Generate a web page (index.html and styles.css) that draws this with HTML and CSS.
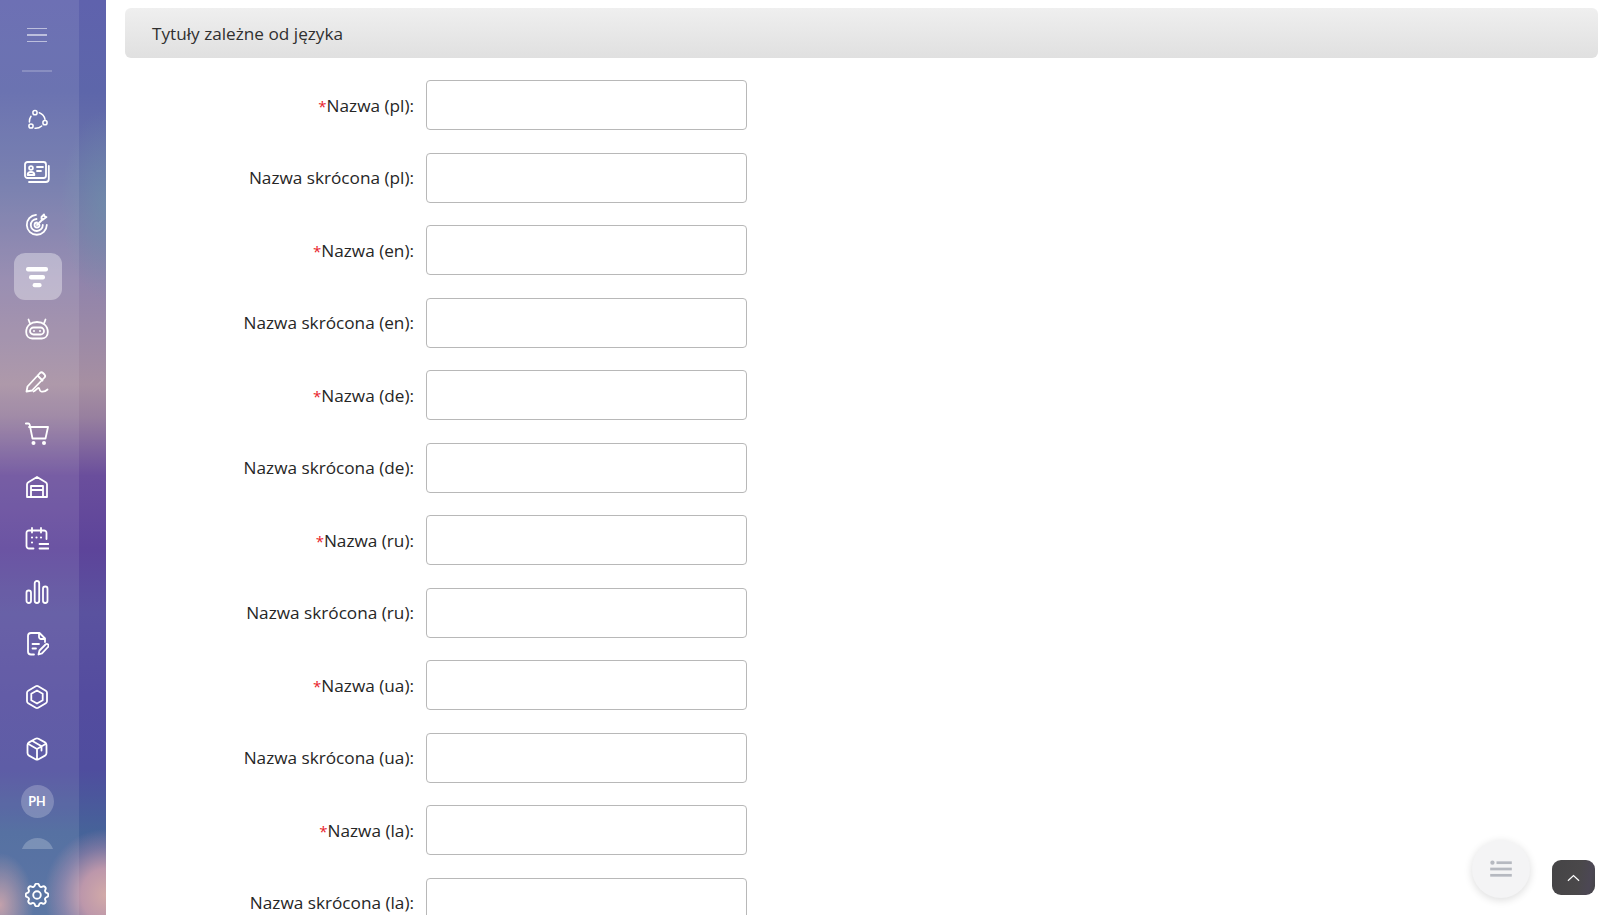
FILE: index.html
```html
<!DOCTYPE html>
<html lang="pl">
<head>
<meta charset="utf-8">
<title>Tytuły zależne od języka</title>
<link rel="stylesheet" href="styles.css">
</head>
<body>
<div class="app">
  <aside class="sidebar">
    <div class="rail">
      <button class="burger" aria-label="Menu"><span></span><span></span><span></span></button>
      <div class="rule"></div>
      <nav class="nav">
        <a class="item"><svg class="ico" viewBox="0 0 24 24"><g class="thin"><circle cx="10" cy="5.700" r="2.100"/><circle cx="6" cy="19" r="2.100"/><circle cx="20" cy="15.700" r="2.100"/><path d="M6 9.300A9 9 0 0 0 4.400 15M14.300 5.700A9 9 0 0 1 20 12.300M10 21.300A9 9 0 0 0 16.700 19"/></g></svg></a>
        <a class="item"><svg class="ico wide" viewBox="0 0 26 22"><rect x="1" y="1" width="21" height="16" rx="2.500"/><path d="M24.800 5v13a3 3 0 0 1-3 3H5"/><circle cx="7" cy="7" r="1.900"/><path d="M3.600 14c0-2 1.500-3 3.400-3s3.400 1 3.400 3zM13 6h6M13 10h4"/></svg></a>
        <a class="item"><svg class="ico" viewBox="0 0 24 24"><path d="M21.800 13A10 10 0 1 1 11 2.800M17.800 13a6 6 0 1 1-6.300-6M14.500 13a2.500 2.500 0 1 1-2.500-2.500M12 13l6-6"/><path d="M16.500 5l2.500-2.500.6 1.900 1.900.6L18 7.500l-1.500-.5z"/></svg></a>
        <a class="item active"><svg class="ico" viewBox="0 0 24 24"><rect class="solid" x="1" y="2" width="22" height="4.400" rx="2"/><rect class="solid" x="4" y="10" width="16" height="4.400" rx="2"/><rect class="solid" x="7.600" y="18" width="9" height="4.200" rx="2"/></svg></a>
        <a class="item"><svg class="ico" viewBox="0 0 24 24"><path d="M5 6.500L3.500 2.500M19 6.500l1.500-4M12 5c-6 0-10.800 3.500-10.800 10 0 4 2.500 6.500 6 6.500h9.600c3.500 0 6-2.500 6-6.500C22.800 8.500 18 5 12 5z"/><rect x="5" y="10.500" width="14" height="7" rx="3.500"/><circle class="solid" cx="9" cy="14" r="1"/><circle class="solid" cx="15" cy="14" r="1"/></svg></a>
        <a class="item"><svg class="ico" viewBox="0 0 24 24"><path d="M2.500 16.500L15 3a2.200 2.200 0 0 1 3 0l1.500 1.500a2.200 2.200 0 0 1 0 3L7 20.500 1.500 21.500zM12.500 5.500l5 5M8.500 21.500c2.500-1 3.500-3.500 5-3.500s.5 3 2.500 3.500 5-.5 6.500-2"/></svg></a>
        <a class="item"><svg class="ico" viewBox="0 0 24 24"><path d="M.8 1.500h2.500c.7 0 1.200.5 1.400 1.200L7.500 16.500h13L23 5H4"/><circle class="solid" cx="8.500" cy="21" r="2"/><circle class="solid" cx="19" cy="21" r="2"/></svg></a>
        <a class="item"><svg class="ico" viewBox="0 0 24 24"><path d="M2 22V9.500c0-1 .5-1.700 1.300-2.200L12 2l8.700 5.300c.8.500 1.300 1.200 1.300 2.200V22zM6 22V11h12v11M6 15h12"/></svg></a>
        <a class="item"><svg class="ico" viewBox="0 0 24 24"><path d="M8.500 21.500h-4.500a2.500 2.500 0 0 1-2.500-2.500V6a2.500 2.500 0 0 1 2.500-2.500h15A2.500 2.500 0 0 1 21.500 6v6M7 1v4.500M16 1v4.500M14.500 17h9M14.500 21.500h9"/><path class="dots" d="M7 10.500h.01M11.500 10.500h.01M16 10.500h.01M7 15.500h.01"/></svg></a>
        <a class="item"><svg class="ico" viewBox="0 0 24 24"><rect x="1.500" y="10.500" width="4.500" height="12.500" rx="2.250"/><rect x="9.700" y="1" width="4.500" height="22" rx="2.250"/><rect x="18" y="6.500" width="4.500" height="16.500" rx="2.250"/></svg></a>
        <a class="item"><svg class="ico" viewBox="0 0 24 24"><path d="M9 22.500H6a3 3 0 0 1-3-3V4a3 3 0 0 1 3-3h8.500l5.500 5.500v3.500M14 1.500V5a2 2 0 0 0 2 2h3.500M7.500 12h6.500M7.500 16.500h3.500M13.500 22.500l1-4 6-6a1.700 1.700 0 0 1 2.500 2.500l-6 6.300z"/></svg></a>
        <a class="item"><svg class="ico" viewBox="0 0 24 24"><path d="M10.800 1.300a2.400 2.400 0 0 1 2.400 0l7.600 4.400a2.400 2.400 0 0 1 1.200 2v8.600a2.400 2.400 0 0 1-1.200 2l-7.600 4.400a2.400 2.400 0 0 1-2.400 0l-7.600-4.400a2.400 2.400 0 0 1-1.200-2V7.700a2.400 2.400 0 0 1 1.200-2z"/><path d="M12 5.500l5.700 3.200v6.600L12 18.500l-5.700-3.200V8.700z"/></svg></a>
        <a class="item"><svg class="ico" viewBox="0 0 24 24"><path d="M10.500 1.800a3 3 0 0 1 3 0l6.500 3.600a3 3 0 0 1 1.500 2.600v8a3 3 0 0 1-1.500 2.600l-6.500 3.600a3 3 0 0 1-3 0L4 18.600a3 3 0 0 1-1.500-2.600V8A3 3 0 0 1 4 5.400zM3 6.800l9 5.200 9-5.200M12 12v10.500M7.500 4l9 5.200v4.300"/></svg></a>
        <a class="item"><span class="avatar">PH</span></a>
        <a class="item"><span class="avatar"></span></a>
      </nav>
      <a class="settings"><svg class="ico" viewBox="2.500 2.500 19 19"><g class="thin"><path d="M10.325 4.317c.426-1.756 2.924-1.756 3.350 0a1.724 1.724 0 0 0 2.573 1.066c1.543-.94 3.310.826 2.370 2.370a1.724 1.724 0 0 0 1.065 2.572c1.756.426 1.756 2.924 0 3.350a1.724 1.724 0 0 0-1.066 2.573c.94 1.543-.826 3.310-2.370 2.370a1.724 1.724 0 0 0-2.572 1.065c-.426 1.756-2.924 1.756-3.350 0a1.724 1.724 0 0 0-2.573-1.066c-1.543.94-3.310-.826-2.370-2.370a1.724 1.724 0 0 0-1.065-2.572c-1.756-.426-1.756-2.924 0-3.350a1.724 1.724 0 0 0 1.066-2.573c-.94-1.543.826-3.310 2.370-2.370c1 .608 2.296.07 2.572-1.065z"/><circle cx="12" cy="12" r="3"/></g></svg></a>
    </div>
  </aside>
  <main class="main">
    <h2 class="section">Tytuły zależne od języka</h2>
    <form class="form">
      <div class="row"><label class="label"><span class="req">*</span>Nazwa (pl):</label><input class="field" type="text"></div>
      <div class="row"><label class="label">Nazwa skrócona (pl):</label><input class="field" type="text"></div>
      <div class="row"><label class="label"><span class="req">*</span>Nazwa (en):</label><input class="field" type="text"></div>
      <div class="row"><label class="label">Nazwa skrócona (en):</label><input class="field" type="text"></div>
      <div class="row"><label class="label"><span class="req">*</span>Nazwa (de):</label><input class="field" type="text"></div>
      <div class="row"><label class="label">Nazwa skrócona (de):</label><input class="field" type="text"></div>
      <div class="row"><label class="label"><span class="req">*</span>Nazwa (ru):</label><input class="field" type="text"></div>
      <div class="row"><label class="label">Nazwa skrócona (ru):</label><input class="field" type="text"></div>
      <div class="row"><label class="label"><span class="req">*</span>Nazwa (ua):</label><input class="field" type="text"></div>
      <div class="row"><label class="label">Nazwa skrócona (ua):</label><input class="field" type="text"></div>
      <div class="row"><label class="label"><span class="req">*</span>Nazwa (la):</label><input class="field" type="text"></div>
      <div class="row"><label class="label">Nazwa skrócona (la):</label><input class="field" type="text"></div>
    </form>
  </main>
</div>
<button class="fab" aria-label="Spis"><svg viewBox="0 0 24 20" class="fab-ico"><circle cx="2.500" cy="3" r="2.400"/><rect x="7" y="1.500" width="17" height="3"/><rect y="8.500" width="24" height="3"/><rect y="15.500" width="24" height="3"/></svg></button>
<button class="top" aria-label="Do góry"><svg viewBox="0 0 14 8" class="top-ico"><path d="M1 7l6-5.500L13 7"/></svg></button>
</body>
</html>
```
FILE: styles.css
```css
* { box-sizing: border-box; }
html, body { margin: 0; height: 100%; overflow: hidden; background: #fff; }
body { font-family: "Open Sans", "Noto Sans", sans-serif; color: #333; }
.app { display: flex; height: 915px; }

.sidebar {
  width: 106px;
  flex: none;
  height: 915px;
  background:
    radial-gradient(ellipse 62px 66px at 106px 895px, #d2aaa8 0%, rgba(198,155,172,.92) 40%, rgba(180,140,172,.45) 72%, rgba(170,130,170,0) 100%),
    radial-gradient(ellipse 34px 52px at 0 905px, rgba(196,155,164,.95) 0%, rgba(190,150,165,.4) 60%, rgba(190,150,165,0) 100%),
    radial-gradient(ellipse 45px 95px at 100% 205px, rgba(110,145,170,.65) 0%, rgba(110,145,170,0) 100%),
    linear-gradient(180deg, #5f62ad 0%, #5d66aa 10%, #6d75a9 20%, #9184ab 31%, #a68fa2 42%, #98809f 45.500%, #6a4e9c 52%, #5d449a 60%, #5a529f 67%, #544c9f 76%, #4f4d9e 84%, #466399 91%, #4c6a9c 100%);
}
.rail {
  width: 79px;
  height: 100%;
  display: flex;
  flex-direction: column;
  background: rgba(255,255,255,.09);
}
.burger {
  display: flex; flex-direction: column; justify-content: center; gap: 4.800px;
  align-self: center;
  width: 20px; height: 70px;
  margin-left: -5px;
  padding: 0; border: 0; background: none;
}
.burger span { display: block; height: 1.500px; background: rgba(255,255,255,.55); }
.rule { width: 30px; height: 2px; margin-left: 22px; background: rgba(255,255,255,.2); flex: none; }
.nav {
  height: 777px;
  flex: none;
  padding-top: 23.500px;
  overflow: hidden;
  display: flex; flex-direction: column; align-items: flex-start;
  margin-left: 14px;
  width: 50px;
}
.item {
  flex: none;
  width: 48px; height: 47px;
  margin-bottom: 5.500px;
  padding-right: 2px;
  display: flex; align-items: center; justify-content: center;
  border-radius: 11px;
}
.item.active { background: rgba(255,255,255,.36); }
.ico { width: 24px; height: 24px; fill: none; stroke: #fff; stroke-width: 1.800; stroke-linecap: round; stroke-linejoin: round; flex: none; }
.ico.wide { width: 26px; height: 22px; }
.ico .solid { fill: #fff; stroke: none; }
.ico .dots { stroke-width: 2.200; }
.ico .thin { stroke-width: 1.500; }
.avatar {
  width: 33px; height: 33px; border-radius: 50%;
  background: rgba(255,255,255,.22);
  color: #fff;
  font: 700 12.500px/33px Lato, sans-serif;
  text-align: center;
  flex: none;
}
.settings { display: flex; justify-content: center; width: 46px; margin: 34px 0 0 14px; }

.main { flex: 1; min-width: 0; padding: 8px 18px 0 19px; overflow: hidden; }
.section {
  height: 50px;
  margin: 0 0 22px;
  padding: 2px 0 0 27px;
  border-radius: 6px;
  background: linear-gradient(180deg, #efefef 0%, #e0e0e0 100%);
  font-size: 17.200px;
  font-weight: 500;
  line-height: 48px;
  color: #303030;
}
.form { display: flex; flex-direction: column; gap: 22.500px; }
.row { display: flex; align-items: center; gap: 12px; height: 50px; flex: none; }
.label { width: 289px; text-align: right; font-size: 17.200px; font-weight: 500; line-height: 23px; color: #262626; }
.req { color: #e8202a; font-size: 15px; font-weight: 400; line-height: 1; }
.field { width: 321px; height: 50px; border: 1px solid #b8b8b8; border-radius: 4px; background: #fff; }

.fab {
  position: fixed; left: 1472px; top: 840px;
  width: 58px; height: 58px;
  padding: 0; border: 0; border-radius: 50%;
  background: #f4f4f5;
  box-shadow: 0 2px 8px rgba(0,0,0,.14);
  display: flex; align-items: center; justify-content: center;
}
.fab-ico { width: 22px; height: 18px; fill: #b6b9c0; }
.top {
  position: fixed; left: 1552px; top: 860px;
  width: 43px; height: 35px;
  padding: 0; border: 0; border-radius: 9px;
  background: linear-gradient(100deg, #454446 0%, #4a484a 60%, #4c4754 85%, #454446 100%);
  display: flex; align-items: center; justify-content: center;
}
.top-ico { width: 13px; height: 8px; fill: none; stroke: #fff; stroke-width: 1.300; }
```
